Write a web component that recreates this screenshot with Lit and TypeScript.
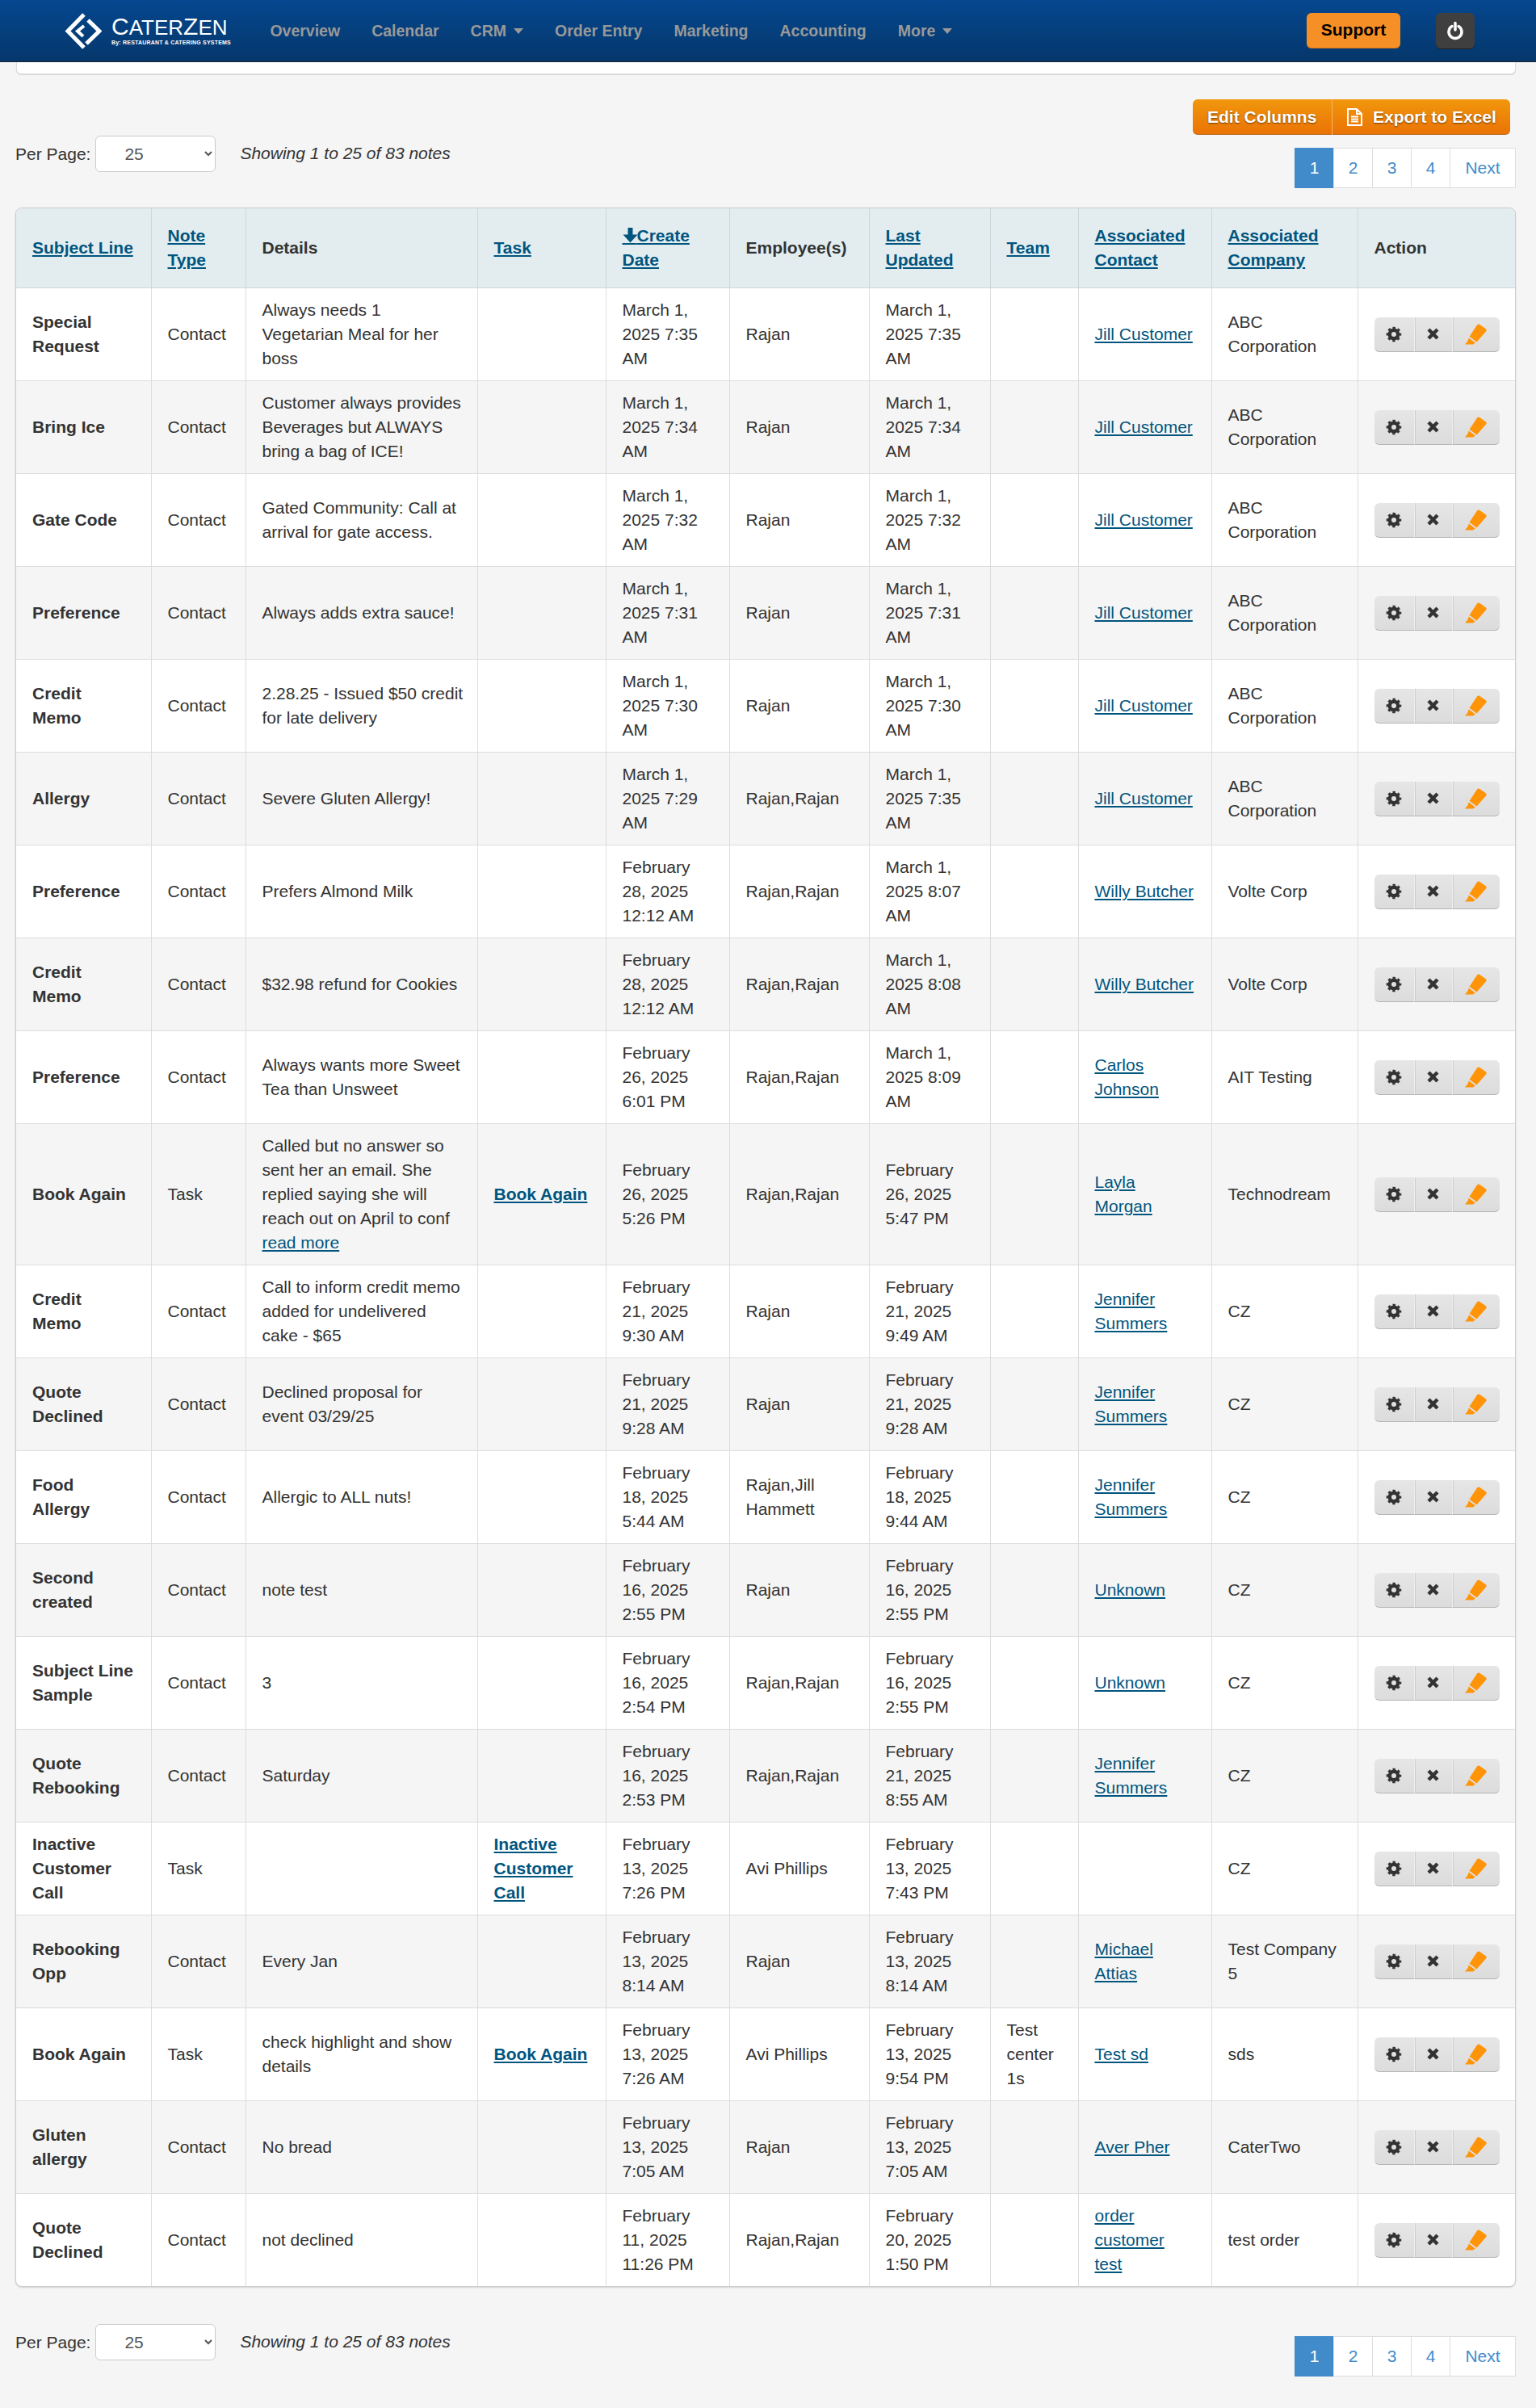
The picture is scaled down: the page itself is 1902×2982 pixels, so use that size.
import { LitElement, css, html, svg } from 'lit';
import { customElement } from 'lit/decorators.js';

type Note = {
    subject: string;
    type: string;
    details: string;
    more?: boolean;
    task?: string;
    created: string;
    employees: string;
    updated: string;
    team?: string;
    contact?: string;
    company: string;
};

const COLUMN_WIDTHS = [167, 117, 287, 159, 153, 173, 150, 109, 165, 181, 195];
const NAV = ['Overview', 'Calendar', 'CRM', 'Order Entry', 'Marketing', 'Accounting', 'More'];
const WITH_CARET = ['CRM', 'More'];

const jill = { employees: 'Rajan', contact: 'Jill Customer', company: 'ABC Corporation', type: 'Contact' };

const NOTES: Note[] = [
    { ...jill, subject: 'Special Request', details: 'Always needs 1 Vegetarian Meal for her boss', created: 'March 1, 2025 7:35 AM', updated: 'March 1, 2025 7:35 AM' },
    { ...jill, subject: 'Bring Ice', details: 'Customer always provides Beverages but ALWAYS bring a bag of ICE!', created: 'March 1, 2025 7:34 AM', updated: 'March 1, 2025 7:34 AM' },
    { ...jill, subject: 'Gate Code', details: 'Gated Community: Call at arrival for gate access.', created: 'March 1, 2025 7:32 AM', updated: 'March 1, 2025 7:32 AM' },
    { ...jill, subject: 'Preference', details: 'Always adds extra sauce!', created: 'March 1, 2025 7:31 AM', updated: 'March 1, 2025 7:31 AM' },
    { ...jill, subject: 'Credit Memo', details: '2.28.25 - Issued $50 credit for late delivery', created: 'March 1, 2025 7:30 AM', updated: 'March 1, 2025 7:30 AM' },
    { ...jill, subject: 'Allergy', details: 'Severe Gluten Allergy!', employees: 'Rajan,Rajan', created: 'March 1, 2025 7:29 AM', updated: 'March 1, 2025 7:35 AM' },
    { subject: 'Preference', type: 'Contact', details: 'Prefers Almond Milk', created: 'February 28, 2025 12:12 AM', employees: 'Rajan,Rajan', updated: 'March 1, 2025 8:07 AM', contact: 'Willy Butcher', company: 'Volte Corp' },
    { subject: 'Credit Memo', type: 'Contact', details: '$32.98 refund for Cookies', created: 'February 28, 2025 12:12 AM', employees: 'Rajan,Rajan', updated: 'March 1, 2025 8:08 AM', contact: 'Willy Butcher', company: 'Volte Corp' },
    { subject: 'Preference', type: 'Contact', details: 'Always wants more Sweet Tea than Unsweet', created: 'February 26, 2025 6:01 PM', employees: 'Rajan,Rajan', updated: 'March 1, 2025 8:09 AM', contact: 'Carlos Johnson', company: 'AIT Testing' },
    { subject: 'Book Again', type: 'Task', details: 'Called but no answer so sent her an email. She replied saying she will reach out on April to conf', more: true, task: 'Book Again', created: 'February 26, 2025 5:26 PM', employees: 'Rajan,Rajan', updated: 'February 26, 2025 5:47 PM', contact: 'Layla Morgan', company: 'Technodream' },
    { subject: 'Credit Memo', type: 'Contact', details: 'Call to inform credit memo added for undelivered cake - $65', created: 'February 21, 2025 9:30 AM', employees: 'Rajan', updated: 'February 21, 2025 9:49 AM', contact: 'Jennifer Summers', company: 'CZ' },
    { subject: 'Quote Declined', type: 'Contact', details: 'Declined proposal for event 03/29/25', created: 'February 21, 2025 9:28 AM', employees: 'Rajan', updated: 'February 21, 2025 9:28 AM', contact: 'Jennifer Summers', company: 'CZ' },
    { subject: 'Food Allergy', type: 'Contact', details: 'Allergic to ALL nuts!', created: 'February 18, 2025 5:44 AM', employees: 'Rajan,Jill Hammett', updated: 'February 18, 2025 9:44 AM', contact: 'Jennifer Summers', company: 'CZ' },
    { subject: 'Second created', type: 'Contact', details: 'note test', created: 'February 16, 2025 2:55 PM', employees: 'Rajan', updated: 'February 16, 2025 2:55 PM', contact: 'Unknown', company: 'CZ' },
    { subject: 'Subject Line Sample', type: 'Contact', details: '3', created: 'February 16, 2025 2:54 PM', employees: 'Rajan,Rajan', updated: 'February 16, 2025 2:55 PM', contact: 'Unknown', company: 'CZ' },
    { subject: 'Quote Rebooking', type: 'Contact', details: 'Saturday', created: 'February 16, 2025 2:53 PM', employees: 'Rajan,Rajan', updated: 'February 21, 2025 8:55 AM', contact: 'Jennifer Summers', company: 'CZ' },
    { subject: 'Inactive Customer Call', type: 'Task', details: '', task: 'Inactive Customer Call', created: 'February 13, 2025 7:26 PM', employees: 'Avi Phillips', updated: 'February 13, 2025 7:43 PM', company: 'CZ' },
    { subject: 'Rebooking Opp', type: 'Contact', details: 'Every Jan', created: 'February 13, 2025 8:14 AM', employees: 'Rajan', updated: 'February 13, 2025 8:14 AM', contact: 'Michael Attias', company: 'Test Company 5' },
    { subject: 'Book Again', type: 'Task', details: 'check highlight and show details', task: 'Book Again', created: 'February 13, 2025 7:26 AM', employees: 'Avi Phillips', updated: 'February 13, 2025 9:54 PM', team: 'Test center 1s', contact: 'Test sd', company: 'sds' },
    { subject: 'Gluten allergy', type: 'Contact', details: 'No bread', created: 'February 13, 2025 7:05 AM', employees: 'Rajan', updated: 'February 13, 2025 7:05 AM', contact: 'Aver Pher', company: 'CaterTwo' },
    { subject: 'Quote Declined', type: 'Contact', details: 'not declined', created: 'February 11, 2025 11:26 PM', employees: 'Rajan,Rajan', updated: 'February 20, 2025 1:50 PM', contact: 'order customer test', company: 'test order' },
];

const logoIcon = svg`
    <polyline points="25,3 5,23.5 25,44" />
    <polyline points="30,10 44,23.5 28,39" />
    <polyline class="inner" points="25,17 17,23.5 24,30" />
`;

@customElement('app-root')
export class AppRoot extends LitElement {
    static styles = css`
        :host {
            display: block;
            background: #f5f5f5;
            color: #333;
            font-family: "Liberation Sans", Arial, sans-serif;
            font-size: 21px;
            line-height: 30px;
        }

        a { color: #00557f; text-decoration: underline; cursor: pointer; }

        header {
            display: flex;
            align-items: center;
            height: 76px;
            padding: 0 76px 0 79px;
            background: linear-gradient(#05478f, #05376b);
            border-bottom: 1px solid #1c2530;
        }

        .brand { display: flex; align-items: center; gap: 12px; color: #fff; }
        .brand svg { width: 47px; height: 47px; display: block; }
        .brand polyline { fill: none; stroke: #fff; stroke-width: 5; }
        .brand polyline.inner { stroke-width: 4; }
        .brand-name { font-size: 26px; line-height: 28px; white-space: nowrap; }
        .brand-name b { font-size: 30px; font-weight: 400; }
        .brand-sub { font-size: 7px; line-height: 9px; font-weight: 700; letter-spacing: .2px; white-space: nowrap; }

        nav { display: flex; margin-left: 29px; }
        nav a {
            display: flex;
            align-items: center;
            padding: 0 19.5px;
            color: #999;
            font-size: 19.5px;
            font-weight: 700;
            text-decoration: none;
        }
        .caret {
            width: 0;
            height: 0;
            margin-left: 9px;
            border-left: 6px solid transparent;
            border-right: 6px solid transparent;
            border-top: 7px solid #999;
        }

        .support {
            margin-left: auto;
            width: 116px;
            height: 44px;
            line-height: 42px;
            text-align: center;
            background: #f68f25;
            border-bottom: 1px solid #d9781a;
            border-radius: 6px;
            box-sizing: border-box;
            color: #000;
            font-weight: 700;
        }
        .power {
            display: flex;
            align-items: center;
            justify-content: center;
            width: 48px;
            height: 44px;
            margin-left: 44px;
            background: #3f3f3f;
            border-radius: 6px;
            box-shadow: 0 1px 0 #222;
        }
        .power svg { width: 22px; height: 24px; }
        .power path { fill: none; stroke: #fff; stroke-width: 3.5; stroke-linecap: round; }

        .strip {
            height: 15px;
            margin: 0 25px 0 20px;
            background: #fff;
            border: 1px solid #ddd;
            border-top: 0;
            border-radius: 0 0 6px 6px;
            box-sizing: border-box;
            box-shadow: 0 1px 1px rgba(0, 0, 0, .12);
        }

        .controls {
            display: flex;
            justify-content: space-between;
            align-items: flex-start;
            padding: 0 25px 0 19px;
        }
        .controls.top { margin-top: 31px; }
        .controls.top .per-page { margin-top: 45px; }
        .controls.top .pager { margin-top: 16px; }
        .controls.bottom { margin-top: 46px; padding-bottom: 39px; }
        .controls.bottom .pager { margin-top: 15px; }

        .per-page { display: flex; align-items: center; }
        .per-page select {
            width: 149px;
            height: 45px;
            margin-left: 6px;
            padding: 0 0 0 31px;
            background-color: #fff;
            border: 1px solid #ccc;
            border-radius: 6px;
            color: #555;
            font: inherit;
        }
        .per-page em { margin-left: 30px; position: relative; top: -1px; }

        .tools { display: flex; flex-direction: column; align-items: flex-end; }

        .export { display: flex; margin-right: 7px; height: 44px; }
        .export button {
            display: flex;
            align-items: center;
            gap: 13px;
            height: 44px;
            padding: 0 0 0 18px;
            background: linear-gradient(#f1970d, #ea7305);
            border: 0;
            border-bottom: 1px solid #bd6a1f;
            color: #fff;
            font: inherit;
            font-weight: 700;
            white-space: nowrap;
            text-shadow: 0 1px 2px rgba(0, 0, 0, .55);
        }
        .export button:first-child { border-radius: 6px 0 0 6px; width: 172px; }
        .export button:last-child { border-radius: 0 6px 6px 0; border-left: 1px solid #f8b567; width: 221px; }
        .export svg { width: 19px; height: 22px; flex: none; }
        .export path { fill: none; stroke: #fff; stroke-width: 2; }

        .pager { display: flex; background: #fff; }
        .pager a {
            width: 49px;
            height: 50px;
            margin-left: -1px;
            line-height: 48px;
            text-align: center;
            box-sizing: border-box;
            background: #fff;
            border: 1px solid #ddd;
            color: #428bca;
            text-decoration: none;
        }
        .pager a:first-child { margin-left: 0; }
        .pager a.active { background: #428bca; border-color: #428bca; color: #fff; }
        .pager a.next { width: 82px; }

        .table-wrap {
            margin: 24px 25px 0 19px;
            background: #fff;
            border: 1px solid #ccc;
            border-radius: 8px;
            overflow: hidden;
            box-shadow: 0 1px 2px rgba(0, 0, 0, .15);
        }
        table { width: 1856px; table-layout: fixed; border-collapse: collapse; }
        th, td { vertical-align: middle; text-align: left; overflow-wrap: break-word; }
        th {
            padding: 19px 20px;
            background: #e3edf0;
            border: 1px solid #cdd7da;
            border-top: 0;
            font-weight: 700;
        }
        th:first-child, td:first-child { border-left: 0; }
        th:last-child, td:last-child { border-right: 0; }
        td { padding: 12px 20px; border: 1px solid #ddd; }
        td.details { padding-right: 17px; }
        tbody tr:nth-child(even) td { background: #f5f5f5; }
        tbody tr:last-child td { border-bottom: 0; }
        .task { font-weight: 700; }

        .sort { position: relative; letter-spacing: -3px; }
        .sort svg { position: absolute; left: 0; top: 1px; width: 19px; height: 20px; fill: #00557f; }

        .actions { display: flex; width: 155px; height: 43px; }
        .actions button {
            display: flex;
            align-items: center;
            justify-content: center;
            height: 43px;
            padding: 0;
            background: linear-gradient(#e6e6e6, #dcdcdc);
            border: 0;
            border-bottom: 1px solid #b5b5b5;
            border-left: 1px solid #f0f0f0;
            box-sizing: border-box;
        }
        .actions button:nth-child(1) { width: 49px; border-left: 0; border-radius: 6px 0 0 6px; }
        .actions button:nth-child(2) { width: 47px; box-shadow: inset 1px 0 0 #ccc; }
        .actions button:nth-child(3) { width: 59px; border-radius: 0 6px 6px 0; box-shadow: inset 1px 0 0 #ccc; }
        .gear { width: 20px; height: 20px; }
        .gear circle { fill: none; stroke: #333; }
        .cross { width: 15px; height: 15px; stroke: #333; stroke-width: 4.4; }
        .marker { width: 27px; height: 26px; fill: #ff9409; }
    `;

    private perPage() {
        return html`
            <div class="per-page">
                <span>Per Page:</span>
                <select><option>25</option></select>
                <em>Showing 1 to 25 of 83 notes</em>
            </div>
        `;
    }

    private pager() {
        return html`
            <div class="pager">
                <a class="active">1</a>
                <a>2</a>
                <a>3</a>
                <a>4</a>
                <a class="next">Next</a>
            </div>
        `;
    }

    private actions() {
        return html`
            <div class="actions">
                <button>
                    <svg class="gear" viewBox="0 0 20 20">
                        <circle cx="10" cy="10" r="5.2" stroke-width="4.4" />
                        <circle cx="10" cy="10" r="8" stroke-width="2.6" stroke-dasharray="3.3 2.98" stroke-dashoffset="1.65" />
                    </svg>
                </button>
                <button>
                    <svg class="cross" viewBox="0 0 15 15">
                        <path d="M2 2 13 13M13 2 2 13" />
                    </svg>
                </button>
                <button>
                    <svg class="marker" viewBox="0 0 27 26">
                        <path d="M18 .8 25.6 6Q27.6 7.6 26 9.6L14.6 22.6 5.6 15.8 15 1.6Q16.2 -.2 18 .8Z" />
                        <path d="M4.8 17.4 12.8 23.6 10 25.6 0 25.6 3.4 21.4Z" />
                    </svg>
                </button>
            </div>
        `;
    }

    private row(note: Note) {
        return html`
            <tr>
                <td><b>${note.subject}</b></td>
                <td>${note.type}</td>
                <td class="details">${note.details}${note.more ? html` <a>read more</a>` : ''}</td>
                <td>${note.task ? html`<a class="task">${note.task}</a>` : ''}</td>
                <td>${note.created}</td>
                <td>${note.employees}</td>
                <td>${note.updated}</td>
                <td>${note.team ?? ''}</td>
                <td>${note.contact ? html`<a>${note.contact}</a>` : ''}</td>
                <td>${note.company}</td>
                <td>${this.actions()}</td>
            </tr>
        `;
    }

    protected render() {
        return html`
            <header>
                <div class="brand">
                    <svg viewBox="0 0 47 47">${logoIcon}</svg>
                    <div>
                        <div class="brand-name"><b>C</b>ATER<b>Z</b>EN</div>
                        <div class="brand-sub">By: RESTAURANT &amp; CATERING SYSTEMS</div>
                    </div>
                </div>
                <nav>
                    ${NAV.map(item => html`
                        <a>${item}${WITH_CARET.includes(item) ? html`<span class="caret"></span>` : ''}</a>
                    `)}
                </nav>
                <div class="support">Support</div>
                <div class="power">
                    <svg viewBox="0 0 22 24">
                        <path d="M7 6.5A8 8 0 1 0 15 6.5M11 2.5V11" />
                    </svg>
                </div>
            </header>

            <div class="strip"></div>

            <div class="controls top">
                ${this.perPage()}
                <div class="tools">
                    <div class="export">
                        <button>Edit Columns</button>
                        <button>
                            <svg viewBox="0 0 19 22">
                                <path d="M1 1H12L18 7V21H1ZM12 1V7H18M5 10.5H14M5 13.5H14M5 16.5H14" />
                            </svg>
                            Export to Excel
                        </button>
                    </div>
                    ${this.pager()}
                </div>
            </div>

            <div class="table-wrap">
                <table>
                    <colgroup>
                        ${COLUMN_WIDTHS.map(w => html`<col style="width:${w}px" />`)}
                    </colgroup>
                    <thead>
                        <tr>
                            <th><a>Subject Line</a></th>
                            <th><a>Note Type</a></th>
                            <th>Details</th>
                            <th><a>Task</a></th>
                            <th>
                                <a><span class="sort">&emsp;<svg viewBox="0 0 19 20"><path d="M6.5 1H12.5V9.5H18.5L9.5 19.5 .5 9.5H6.5Z" /></svg></span>Create Date</a>
                            </th>
                            <th>Employee(s)</th>
                            <th><a>Last Updated</a></th>
                            <th><a>Team</a></th>
                            <th><a>Associated Contact</a></th>
                            <th><a>Associated Company</a></th>
                            <th>Action</th>
                        </tr>
                    </thead>
                    <tbody>
                        ${NOTES.map(note => this.row(note))}
                    </tbody>
                </table>
            </div>

            <div class="controls bottom">
                ${this.perPage()}
                ${this.pager()}
            </div>
        `;
    }
}
